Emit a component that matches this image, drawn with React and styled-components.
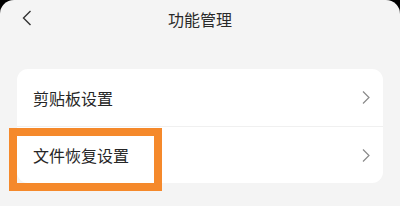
import styled, { createGlobalStyle } from "styled-components";

const GlobalStyle = createGlobalStyle`
  html, body {
    margin: 0;
    padding: 0;
    background: #000;
  }
  body {
    font-family: "Noto Sans CJK SC", "Noto Sans", sans-serif;
  }
`;

const Screen = styled.div`
  width: 400px;
  height: 206px;
  background: #f4f4f4;
  border-radius: 14px 14px 0 0;
  overflow: hidden;
  display: flex;
  flex-direction: column;
`;

const Header = styled.div`
  position: relative;
  height: 38px;
  display: flex;
  align-items: center;
  justify-content: center;
`;

const BackButton = styled.div`
  position: absolute;
  left: 20px;
  top: 9px;
  width: 14px;
  height: 18px;
  display: flex;
  align-items: center;
  justify-content: center;
`;

const Title = styled.span`
  font-size: 16px;
  color: #2a2a2a;
  line-height: 1;
  margin-top: 0px;
`;

const Card = styled.div`
  margin: 31px 17px 0;
  background: #fff;
  border-radius: 11px;
  display: flex;
  flex-direction: column;
`;

const Row = styled.div`
  position: relative;
  height: 57px;
  display: flex;
  align-items: center;
  justify-content: space-between;
  padding: 0 12px 0 16px;
  border-top: ${(p) => (p.$divider ? "1px solid #f0f0f0" : "none")};
  box-sizing: border-box;
`;

const Label = styled.span`
  font-size: 16px;
  color: #262626;
  line-height: 1;
`;

const Highlight = styled.div`
  position: absolute;
  left: -8px;
  top: 1px;
  width: 153px;
  height: 63px;
  border: 8px solid #f5892b;
  box-sizing: border-box;
`;

function ChevronLeft() {
  return (
    <svg width="12" height="18" viewBox="0 0 12 18">
      <path d="M9.5 2 L2.5 9 L9.5 16" fill="none" stroke="#333" strokeWidth="1.4" />
    </svg>
  );
}

function ChevronRight() {
  return (
    <svg width="10" height="15" viewBox="0 0 10 15">
      <path d="M2 1.5 L8 7.5 L2 13.5" fill="none" stroke="#8a8a8a" strokeWidth="1.2" />
    </svg>
  );
}

export default function App() {
  return (
    <>
      <GlobalStyle />
      <Screen>
        <Header>
          <BackButton>
            <ChevronLeft />
          </BackButton>
          <Title>功能管理</Title>
        </Header>
        <Card>
          <Row>
            <Label>剪贴板设置</Label>
            <ChevronRight />
          </Row>
          <Row $divider>
            <Label>文件恢复设置</Label>
            <ChevronRight />
            <Highlight />
          </Row>
        </Card>
      </Screen>
    </>
  );
}
